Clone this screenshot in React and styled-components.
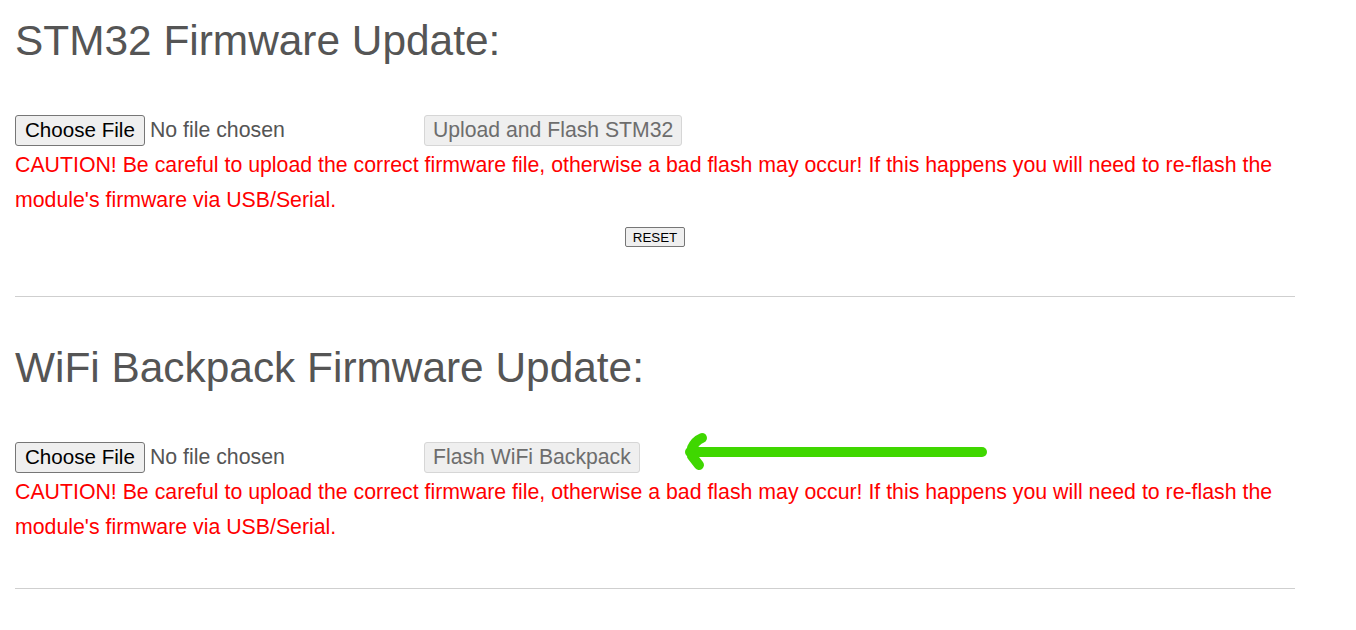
import React from 'react';
import styled, { createGlobalStyle } from 'styled-components';

const GlobalStyle = createGlobalStyle`
    html, body {
        margin: 0;
        padding: 0;
        background: #fff;
    }
    body {
        font-family: "Liberation Sans", Arial, sans-serif;
    }
`;

const Page = styled.div`
    width: 1280px;
    padding: 0 15px;
`;

const Section = styled.section`
    padding-top: ${p => (p.first ? '0' : '30px')};
    padding-bottom: ${p => p.bottomSpace || '43px'};
    border-bottom: 1px solid #cfcfcf;
`;

const Title = styled.h1`
    margin: 16px 0 49px;
    font-size: 42.4px;
    line-height: 50px;
    font-weight: 400;
    color: #555;
`;

const UploadRow = styled.div`
    position: relative;
    display: flex;
    align-items: center;
    height: 31px;
`;

const FilePicker = styled.label`
    display: flex;
    align-items: center;
    gap: 5px;
    width: 409px;
    font-size: 21.3px;
    color: #555;
`;

const ChooseButton = styled.span`
    display: inline-flex;
    align-items: center;
    box-sizing: border-box;
    height: 31px;
    padding: 0 9px 1px;
    font-size: 20.6px;
    line-height: 1;
    color: #000;
    background: #efefef;
    border: 1px solid #767676;
    border-radius: 3px;
`;

const HiddenInput = styled.input`
    display: none;
`;

const FlashButton = styled.button`
    box-sizing: border-box;
    height: 31px;
    padding: 0 8px 1px;
    font-family: inherit;
    font-size: 21.2px;
    line-height: 1;
    color: #6d6d6d;
    background: #efefef;
    border: 1px solid #d6d6d6;
    border-radius: 3px;
`;

const Caution = styled.p`
    margin: 2px 0 0;
    font-size: 21.3px;
    line-height: 35px;
    color: #ff0000;
`;

const ResetRow = styled.div`
    display: flex;
    justify-content: center;
    margin-top: 9px;
    margin-bottom: 6px;
`;

const ResetButton = styled.button`
    box-sizing: border-box;
    height: 20px;
    padding: 0 7px;
    font-family: inherit;
    font-size: 13.33px;
    color: #000;
    background: #efefef;
    border: 1px solid #767676;
    border-radius: 2px;
`;

const ArrowMark = styled.svg`
    position: absolute;
    left: 665px;
    top: -12px;
`;

const CAUTION_TEXT = "CAUTION! Be careful to upload the correct firmware file, otherwise a bad flash may occur! If this happens you will need to re-flash the module's firmware via USB/Serial.";

const Arrow = () => (
    <ArrowMark width="312" height="44" viewBox="0 0 312 44">
        <g stroke="#3fd700" strokeWidth="10" strokeLinecap="round" fill="none">
            <path d="M 10 22 L 302 22" />
            <path d="M 22 8 Q 15 11 12 18" />
            <path d="M 12 26 L 19 35" />
        </g>
    </ArrowMark>
);

const UploadBlock = ({ label, arrow }) => (
    <>
        <UploadRow>
            <FilePicker>
                <ChooseButton>Choose File</ChooseButton>
                <HiddenInput type="file" />
                No file chosen
            </FilePicker>
            <FlashButton disabled>{label}</FlashButton>
            {arrow && <Arrow />}
        </UploadRow>
        <Caution>{CAUTION_TEXT}</Caution>
    </>
);

export default function App() {
    return (
        <Page>
            <GlobalStyle />
            <Section first>
                <Title>STM32 Firmware Update:</Title>
                <UploadBlock label="Upload and Flash STM32" />
                <ResetRow>
                    <ResetButton>RESET</ResetButton>
                </ResetRow>
            </Section>
            <Section>
                <Title>WiFi Backpack Firmware Update:</Title>
                <UploadBlock label="Flash WiFi Backpack" arrow />
            </Section>
        </Page>
    );
}
